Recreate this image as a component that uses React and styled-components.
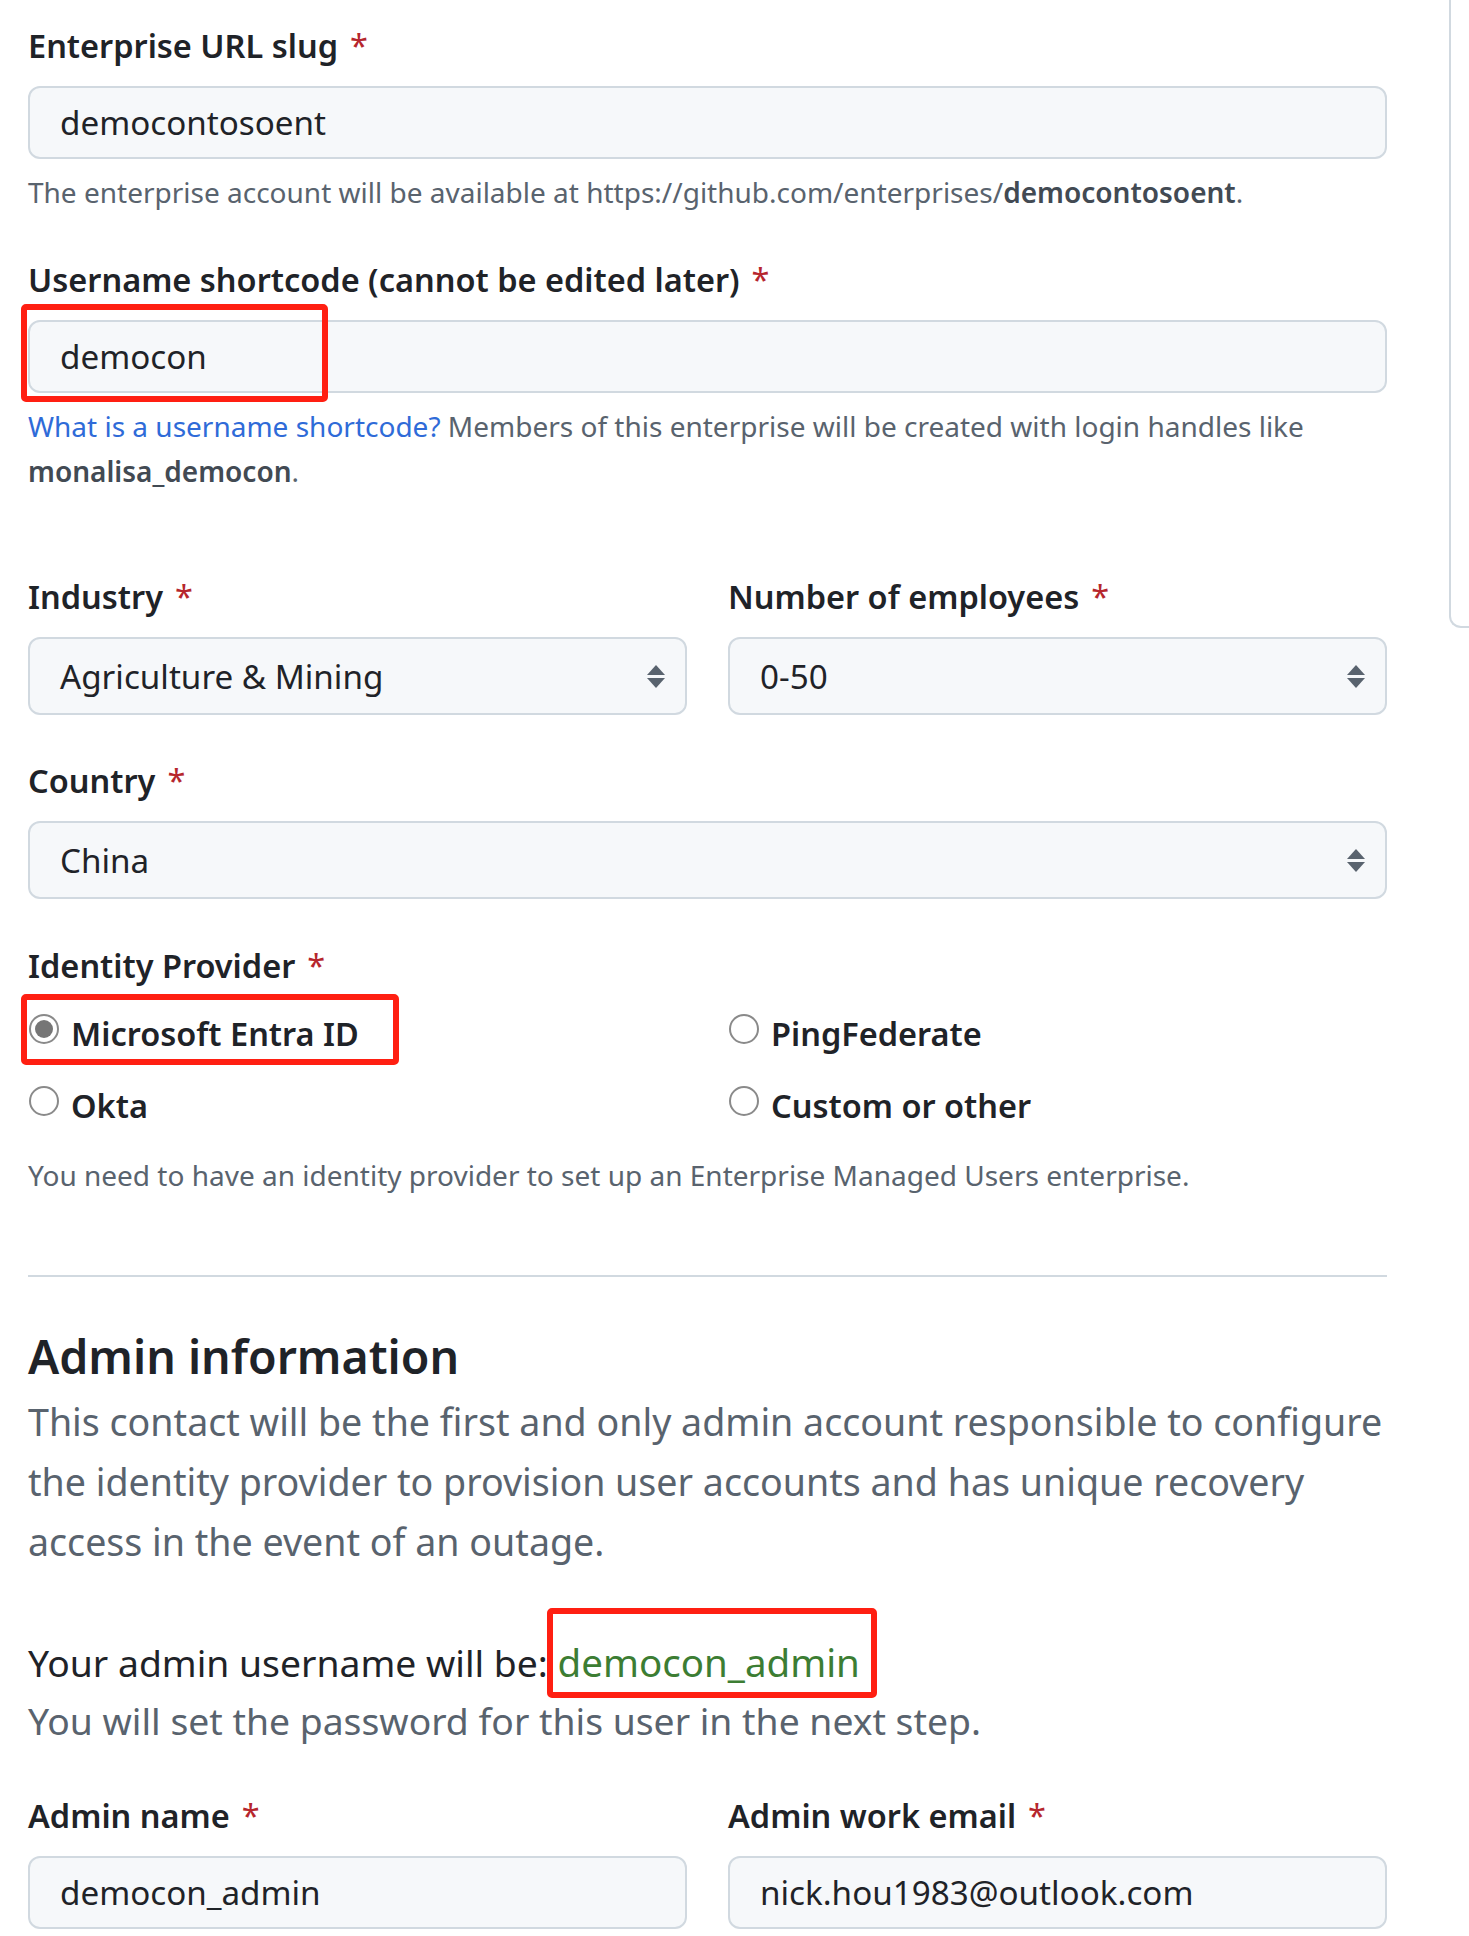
import React from 'react';
import styled, { createGlobalStyle, css } from 'styled-components';

// palette
const colors = {
  text: '#1f2328',
  muted: '#59636e',
  strong: '#424a53',
  border: '#d1d9e0',
  inputBg: '#f6f8fa',
  danger: '#b6262d',
  link: '#2f6bd8',
  success: '#3c7d33',
  mark: '#ff1f12',
  radio: '#8a8a8a',
};

const GlobalStyle = createGlobalStyle`
  html, body {
    margin: 0;
    padding: 0;
    background: #fff;
  }
  body {
    font-family: "Noto Sans", "Open Sans", sans-serif;
    color: ${colors.text};
  }
  * {
    box-sizing: border-box;
  }
`;

// page frame
const Page = styled.div`
  display: flex;
  align-items: flex-start;
  padding: 26px 0 0 28px;
`;

const Main = styled.main`
  width: 1359px;
  flex-shrink: 0;
`;

const Aside = styled.aside`
  flex: 1;
  margin: -26px 0 0 62px;
  height: 628px;
  border-left: 2px solid ${colors.border};
  border-bottom: 2px solid ${colors.border};
  border-bottom-left-radius: 12px;
`;

// form parts
const Field = styled.div`
  margin-top: ${p => p.$gap ?? 45}px;
`;

const Label = styled.label`
  display: block;
  font-size: 32.5px;
  font-weight: 600;
  line-height: 40px;
  margin-bottom: ${p => p.$bottom ?? 20}px;
`;

const Required = styled.span`
  color: ${colors.danger};
  font-weight: 400;
  margin-left: 12px;
`;

const controlBase = css`
  display: block;
  width: 100%;
  height: ${p => (p.$tall ? 78 : 73)}px;
  border: 2px solid ${colors.border};
  border-radius: 12px;
  background: ${colors.inputBg};
  padding: 0 30px;
  font-family: inherit;
  font-size: 33.2px;
  color: ${colors.text};
`;

const TextInput = styled.input`
  ${controlBase};
  outline: none;
`;

const SelectBox = styled.div`
  ${controlBase};
  display: flex;
  align-items: center;
  justify-content: space-between;
  padding-right: 19px;
`;

const Help = styled.p`
  margin: ${p => p.$top ?? 11}px 0 0;
  font-size: 28px;
  line-height: 45px;
  color: ${colors.muted};
`;

const Strong = styled.strong`
  font-weight: 600;
  color: ${colors.strong};
`;

const Link = styled.a`
  color: ${colors.link};
  text-decoration: none;
`;

const Columns = styled.div`
  display: grid;
  grid-template-columns: 659px 659px;
  column-gap: 41px;
  row-gap: ${p => p.$rowGap ?? 0}px;
  margin-top: ${p => p.$top ?? 0}px;
`;

// red annotation frames drawn over the screenshot
const Marked = styled.div`
  position: relative;
  display: ${p => (p.$inline ? 'inline-block' : 'block')};
`;

const Mark = styled.span`
  position: absolute;
  left: ${p => p.$left}px;
  top: ${p => p.$top}px;
  width: ${p => p.$w}px;
  height: ${p => p.$h}px;
  border: 6px solid ${colors.mark};
  border-radius: 5px;
  pointer-events: none;
`;

// radios
const RadioOption = styled.label`
  display: flex;
  align-items: flex-start;
  gap: 12px;
  height: 44px;
  font-size: 32.5px;
  font-weight: 600;
  line-height: 44px;
`;

const RadioCircle = styled.span`
  position: relative;
  flex-shrink: 0;
  width: 30px;
  height: 30px;
  margin: 2px 0 0 1px;
  border: 2px solid ${colors.radio};
  border-radius: 50%;
  background: #fff;

  ${p =>
    p.$checked &&
    css`
      &::after {
        content: '';
        position: absolute;
        left: 4px;
        top: 4px;
        width: 18px;
        height: 18px;
        border-radius: 50%;
        background: #767676;
      }
    `}
`;

const Divider = styled.hr`
  margin: 77px 0 0;
  border: 0;
  border-top: 2px solid ${colors.border};
`;

const Heading = styled.h2`
  margin: 49px 0 0;
  font-size: 46.5px;
  font-weight: 600;
  line-height: 60px;
`;

const Lead = styled.p`
  margin: 6px 0 0;
  font-size: 37.6px;
  line-height: 60px;
  color: ${colors.muted};
`;

const Line = styled.p`
  margin: ${p => p.$top ?? 0}px 0 0;
  font-size: 37.3px;
  line-height: 58px;
  color: ${p => (p.$muted ? colors.muted : colors.text)};
`;

const Username = styled.span`
  color: ${colors.success};
  font-size: 38.5px;
`;

const SelectArrows = () => (
  <svg width="20" height="25" viewBox="0 0 20 25" fill={colors.muted}>
    <polygon points="10,1 19,11 1,11" />
    <polygon points="1,14 19,14 10,24" />
  </svg>
);

const Select = ({ value }) => (
  <SelectBox $tall>
    <span>{value}</span>
    <SelectArrows />
  </SelectBox>
);

const Radio = ({ label, checked }) => (
  <RadioOption>
    <RadioCircle $checked={checked} />
    {label}
  </RadioOption>
);

const Req = () => <Required>*</Required>;

export default function App() {
  return (
    <>
      <GlobalStyle />
      <Page>
        <Main>
          <Field $gap={0}>
            <Label>Enterprise URL slug<Req /></Label>
            <TextInput readOnly value="democontosoent" />
            <Help>
              The enterprise account will be available at https://github.com/enterprises/
              <Strong>democontosoent</Strong>.
            </Help>
          </Field>

          <Field>
            <Label>Username shortcode (cannot be edited later)<Req /></Label>
            <Marked>
              <TextInput readOnly value="democon" />
              <Mark $left={-7} $top={-16} $w={307} $h={98} />
            </Marked>
            <Help>
              <Link href="#">What is a username shortcode?</Link> Members of this enterprise will be
              created with login handles like <Strong>monalisa_democon</Strong>.
            </Help>
          </Field>

          <Columns $top={83}>
            <div>
              <Label>Industry<Req /></Label>
              <Select value="Agriculture & Mining" />
            </div>
            <div>
              <Label>Number of employees<Req /></Label>
              <Select value="0-50" />
            </div>
          </Columns>

          <Field $gap={46}>
            <Label>Country<Req /></Label>
            <Select value="China" />
          </Field>

          <Field $gap={47}>
            <Label as="div" $bottom={0}>Identity Provider<Req /></Label>
            <Columns $top={26} $rowGap={28}>
              <Marked>
                <Radio label="Microsoft Entra ID" checked />
                <Mark $left={-7} $top={-18} $w={378} $h={71} />
              </Marked>
              <Radio label="PingFederate" />
              <Radio label="Okta" />
              <Radio label="Custom or other" />
            </Columns>
            <Help $top={25}>
              You need to have an identity provider to set up an Enterprise Managed Users enterprise.
            </Help>
          </Field>

          <Divider />

          <Heading>Admin information</Heading>
          <Lead>
            This contact will be the first and only admin account responsible to configure the
            identity provider to provision user accounts and has unique recovery access in the
            event of an outage.
          </Lead>

          <Line $top={61}>
            Your admin username will be:{' '}
            <Marked $inline>
              <Username>democon_admin</Username>
              <Mark $left={-11} $top={-25} $w={330} $h={90} />
            </Marked>
          </Line>
          <Line $muted>You will set the password for this user in the next step.</Line>

          <Columns $top={46}>
            <div>
              <Label>Admin name<Req /></Label>
              <TextInput readOnly value="democon_admin" />
            </div>
            <div>
              <Label>Admin work email<Req /></Label>
              <TextInput readOnly value="nick.hou1983@outlook.com" />
            </div>
          </Columns>
        </Main>
        <Aside />
      </Page>
    </>
  );
}
